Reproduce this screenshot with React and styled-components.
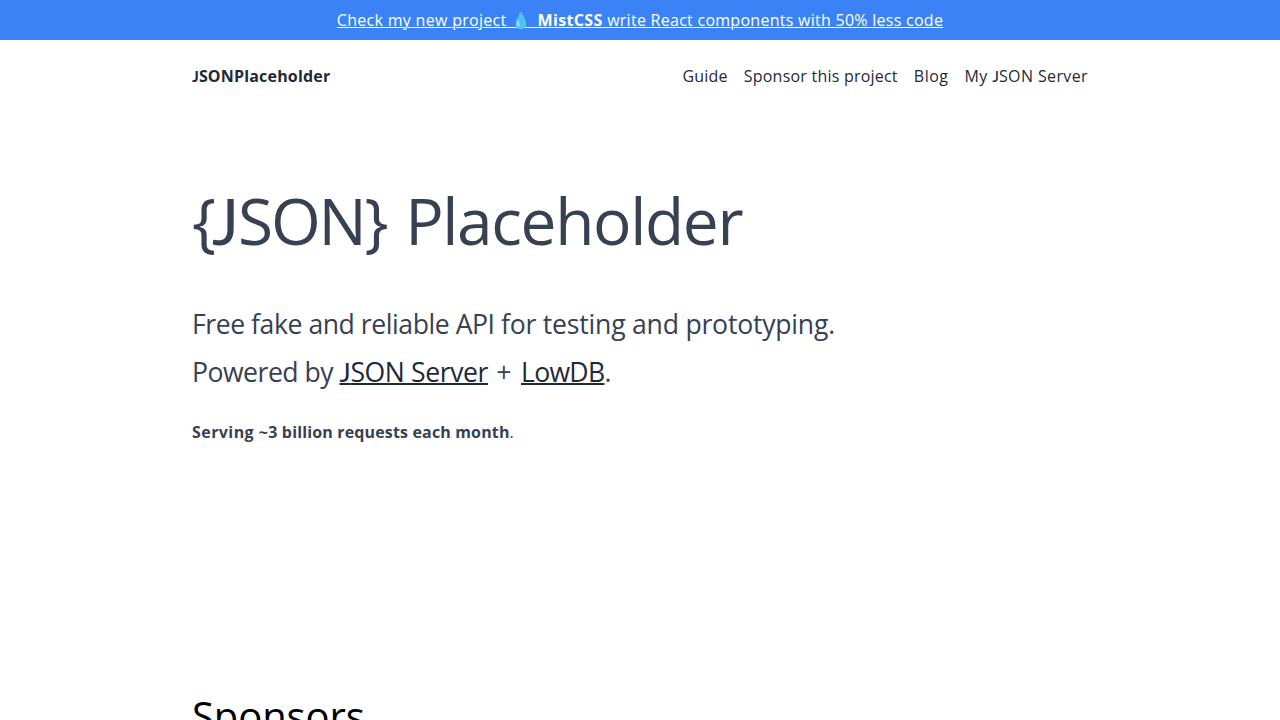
import React from "react";
import styled, { createGlobalStyle } from "styled-components";

const GlobalStyle = createGlobalStyle`
  *, *::before, *::after { box-sizing: border-box; }
  html, body { margin: 0; }
  body {
    height: 100vh;
    overflow: hidden;
    background: #fff;
    color: #000;
    font-family: "Open Sans", "Noto Sans", sans-serif;
    font-size: 16px;
    line-height: 24px;
  }
`;

const Banner = styled.a`
  display: block;
  height: 40px;
  padding: 8px 0;
  background: #3b82f6;
  color: #fff;
  text-align: center;
  white-space: pre;
  text-decoration: underline;
  text-underline-offset: 1px;
  text-decoration-thickness: 1px;
`;

const Tracked = styled.span`
  letter-spacing: ${({ $by }) => $by}px;
`;

/* Capital J that sits on the baseline instead of descending below it. */
const BaselineJ = styled.span`
  font-family: "Lato", sans-serif;
  letter-spacing: ${({ $by = 0 }) => $by}px;
`;

const Container = styled.div`
  width: 896px;
  margin: 0 auto;
`;

const Header = styled.header`
  display: flex;
  align-items: center;
  justify-content: space-between;
  height: 72px;
  color: #1f2937;
`;

const Brand = styled.a`
  font-weight: 700;
  letter-spacing: 0.18px;
`;

const Nav = styled.nav`
  display: flex;
  gap: 16px;
`;

const NavLink = styled.a`
  letter-spacing: ${({ $tracking }) => $tracking}px;
  white-space: pre;
`;

const Hero = styled.section`
  padding-top: 64px;
  height: 556px;
  color: #374151;
`;

const Title = styled.h1`
  margin: 0;
  padding-top: 13px;
  font-size: 64px;
  font-weight: 400;
  line-height: 64px;
  white-space: pre;
`;

const Lead = styled.p`
  margin: 47px 0 0;
  font-size: 26.6px;
  line-height: 48px;
  white-space: pre;
`;

const TextLink = styled.a`
  color: #1f2937;
  letter-spacing: ${({ $tracking }) => $tracking}px;
  text-decoration: underline;
  text-decoration-thickness: 2px;
  text-underline-offset: 1px;
`;

const Stat = styled.p`
  margin: 24px 0 0;
`;

const StatStrong = styled.strong`
  font-weight: 700;
  letter-spacing: 0.15px;
`;

const SectionTitle = styled.h2`
  margin: 0;
  padding-top: 24px;
  font-size: 40px;
  font-weight: 400;
  line-height: 48px;
`;

export default function App() {
  return (
    <>
      <GlobalStyle />
      <Banner>
        <Tracked $by={0.3}>Check my new project </Tracked>
        <Tracked $by={2}>💧</Tracked>
        <Tracked as="strong" $by={0.35}> MistCSS</Tracked>
        <Tracked $by={0.27}> write React components with 50% less code</Tracked>
      </Banner>
      <Container>
        <Header>
          <Brand>
            <BaselineJ>J</BaselineJ>SONPlaceholder
          </Brand>
          <Nav>
            <NavLink $tracking={0.2}>Guide</NavLink>
            <NavLink $tracking={0.22}>Sponsor this project</NavLink>
            <NavLink $tracking={0.5}>Blog</NavLink>
            <NavLink $tracking={0.38}>
              My <BaselineJ>J</BaselineJ>SON Server
            </NavLink>
          </Nav>
        </Header>
        <Hero>
          <Title>
            <Tracked $by={-4}>{"{"}</Tracked>
            <BaselineJ $by={-1}>J</BaselineJ>
            <Tracked $by={-2.2}>{"SON}"}</Tracked>
            <Tracked $by={2.2}> </Tracked>
            <Tracked $by={-1.35}>Placeholder</Tracked>
          </Title>
          <Lead>
            <Tracked $by={-0.45}>Free fake and reliable API </Tracked>
            <Tracked $by={-0.22}>for testing and prototyping.</Tracked>
            <br />
            <Tracked $by={-0.5}>Powered by </Tracked>
            <TextLink $tracking={-0.4}>
              <BaselineJ $by={-0.4}>J</BaselineJ>SON Server
            </TextLink>
            <Tracked $by={1.3}> + </Tracked>
            <TextLink $tracking={-0.7}>LowDB</TextLink>.
          </Lead>
          <Stat>
            <StatStrong>
              <Tracked $by={0.43}>Serving ~</Tracked>3 billion requests each month
            </StatStrong>
            .
          </Stat>
        </Hero>
        <SectionTitle>
          <Tracked $by={-0.1}>Sponsors</Tracked>
        </SectionTitle>
      </Container>
    </>
  );
}
